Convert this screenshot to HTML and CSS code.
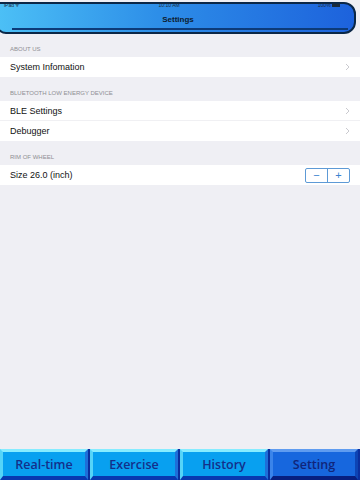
FILE: index.html
```html
<!DOCTYPE html>
<html>
<head>
<meta charset="utf-8">
<link rel="stylesheet" href="styles.css">
</head>
<body>
<div class="screen">
  <header class="navbar">
    <div class="status">
      <span class="st-left">iPad ᯤ</span>
      <span class="st-mid">10:10 AM</span>
      <span class="st-right">100% <span class="batt"></span></span>
    </div>
    <div class="title">Settings</div>
    <div class="nav-line"></div>
  </header>

  <main class="content">
    <div class="sec-head">ABOUT US</div>
    <div class="group">
      <div class="row"><span>System Infomation</span><svg class="chev" viewBox="0 0 5 8"><path d="M1 1 L4 4 L1 7"/></svg></div>
    </div>

    <div class="sec-head">BLUETOOTH LOW ENERGY DEVICE</div>
    <div class="group">
      <div class="row"><span>BLE Settings</span><svg class="chev" viewBox="0 0 5 8"><path d="M1 1 L4 4 L1 7"/></svg></div>
      <div class="row"><span>Debugger</span><svg class="chev" viewBox="0 0 5 8"><path d="M1 1 L4 4 L1 7"/></svg></div>
    </div>

    <div class="sec-head">RIM OF WHEEL</div>
    <div class="group">
      <div class="row"><span>Size 26.0 (inch)</span>
        <div class="stepper"><span class="step">−</span><span class="step">+</span></div>
      </div>
    </div>
  </main>

  <nav class="tabbar">
    <div class="tab">Real-time</div>
    <div class="tab">Exercise</div>
    <div class="tab">History</div>
    <div class="tab active">Setting</div>
  </nav>
</div>
</body>
</html>
```
FILE: styles.css
```css
html, body {
  margin: 0;
  padding: 0;
}
body {
  width: 360px;
  height: 480px;
  overflow: hidden;
  background: #efeff4;
  font-family: "Liberation Sans", Arial, sans-serif;
}
.screen {
  display: flex;
  flex-direction: column;
  height: 480px;
}
.navbar {
  position: relative;
  height: 32px;
  margin: 2px 0 0 -4px;
  width: 360px;
  background: linear-gradient(90deg, #4cc0f6 0%, #2d8ee8 45%, #1d62dc 100%);
  border: 2px solid #0b2747;
  border-radius: 4px 12px 12px 10px;
  box-sizing: border-box;
  flex: none;
}
.status {
  display: flex;
  justify-content: space-between;
  align-items: center;
  height: 6px;
  padding: 0 14px 0 6px;
  font-size: 5px;
  color: #1a2a3a;
  line-height: 6px;
  margin-top: -2px;
}
.batt {
  display: inline-block;
  width: 8px;
  height: 3px;
  background: #1a2a3a;
  vertical-align: middle;
}
.title {
  text-align: center;
  font-size: 8px;
  font-weight: bold;
  color: #0d1b2e;
  line-height: 10px;
  margin-top: 7px;
  padding-left: 4px;
}
.nav-line {
  position: absolute;
  left: 14px;
  right: 6px;
  bottom: 2px;
  height: 2px;
  background: #0c3a78;
}
.content {
  flex: 1;
  padding-top: 11px;
}
.sec-head {
  font-size: 6px;
  color: #8e8e93;
  padding: 0 0 4px 10px;
  line-height: 8px;
}
.group {
  background: #fff;
  margin-bottom: 12px;
}
.row {
  display: flex;
  align-items: center;
  justify-content: space-between;
  height: 20px;
  padding: 0 10px 0 10px;
  font-size: 9px;
  color: #111;
  border-bottom: 1px solid #f0f0f3;
  box-sizing: border-box;
}
.row:last-child {
  border-bottom: none;
}
.chev {
  width: 5px;
  height: 8px;
  fill: none;
  stroke: #c4c4c9;
  stroke-width: 0.9;
}
.stepper {
  display: flex;
  border: 1px solid #5d9ad6;
  border-radius: 2px;
  height: 15px;
  box-sizing: border-box;
}
.step {
  width: 21px;
  display: flex;
  align-items: center;
  justify-content: center;
  color: #3b82d0;
  font-size: 11px;
  line-height: 13px;
}
.step + .step {
  border-left: 1px solid #5d9ad6;
}
.tabbar {
  flex: none;
  height: 31px;
  display: flex;
  background: #0a2f9e;
  padding-right: 2px;
  gap: 2px;
}
.tab {
  flex: 1;
  display: flex;
  align-items: center;
  justify-content: center;
  box-sizing: border-box;
  height: 31px;
  background: #08a0f0;
  border-top: 3px solid #86ecff;
  border-left: 3px solid #55d4f8;
  border-right: 3px solid #1e6fd8;
  border-bottom: 4px solid #0838b0;
  font-family: "Open Sans", "DejaVu Sans", sans-serif;
  font-weight: 600;
  font-size: 12.5px;
  color: #142f8a;
}
.tab.active {
  background: #1767de;
  border-top-color: #5f9cf0;
  border-left-color: #3a84ea;
  border-right-color: #0d44b4;
  border-bottom-color: #071f80;
  color: #10257a;
}
```
